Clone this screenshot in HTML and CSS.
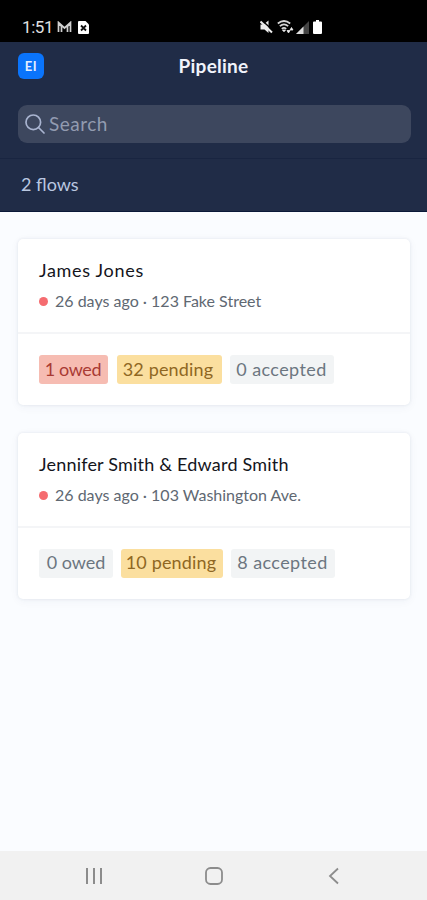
FILE: index.html
```html
<!DOCTYPE html>
<html lang="en">
<head>
<meta charset="utf-8">
<title>Pipeline</title>
<link rel="stylesheet" href="styles.css">
</head>
<body>
<div class="status">
  <div class="status-left">
    <span class="time">1:51</span>
    <svg class="mail" width="15" height="12" viewBox="0 0 15 12" fill="none" stroke="#d0d0d0"><path d="M1.500 11V1.500L7.500 7l6-5.500V11M4.500 11V5.500M10.500 11V5.500M1.500 1.500l3 4M13.500 1.500l-3 4" stroke-width="1.700"/></svg>
    <svg class="sim" width="11" height="13" viewBox="0 0 11 13"><path d="M1 0h6.500L11 3.500V12q0 1-1 1H1q-1 0-1-1V1q0-1 1-1z" fill="#fff"/><path d="M3 4.500l5 5M8 4.500l-5 5" stroke="#111" stroke-width="1.800"/></svg>
  </div>
  <div class="status-right">
    <svg width="13" height="14" viewBox="0 0 13 14"><path d="M0.500 4.500h3L8.500 0.500v12.500L4.500 9.500h-4z" fill="#eee"/><path d="M1.500 0l12 11" stroke="#000" stroke-width="1.500"/><path d="M0.500 1.500l11.500 11" stroke="#eee" stroke-width="2"/></svg>
    <svg class="wifi" width="17" height="14" viewBox="0 0 17 14" fill="none" stroke="#d5d5d5" stroke-width="1.700"><path d="M0.800 3.500q6.200-5 12.400 0M2.800 6.200q4.200-3.500 8.400 0M4.800 8.800q2.200-1.800 4.400 0"/><path d="M5.500 10h3L7 11.800zM10 10.500l1.500 2.500 1.500-2.500zM13 10l1.500-2.500 1.500 2.500z" fill="#eee" stroke="#eee" stroke-width=".8"/></svg>
    <svg class="signal" width="13" height="13" viewBox="0 0 13 13"><path d="M0 13L13 0v13z" fill="#444"/><path d="M0 13l7.500-7.500V13z" fill="#ddd"/></svg>
    <svg class="battery" width="9" height="14" viewBox="0 0 9 14"><path d="M3 0h3v1.500h2q1 0 1 1V13q0 1-1 1H1q-1 0-1-1V2.500q0-1 1-1h2z" fill="#fff"/></svg>
  </div>
</div>
<header class="header">
  <div class="titlebar">
    <div class="avatar">EI</div>
    <h1 class="title">Pipeline</h1>
  </div>
  <div class="search">
    <svg width="20" height="20" viewBox="0 0 20 20" fill="none" stroke="#a9b4d0" stroke-width="1.700" stroke-linecap="round"><circle cx="8.300" cy="8.300" r="7.300"/><path d="M13.500 13.500l5.500 5.500"/></svg>
    <span class="search-label">Search</span>
  </div>
  <div class="count"><span>2 flows</span></div>
</header>
<main class="list">
  <article class="card">
    <div class="info">
      <h2 class="name name-a">James Jones</h2>
      <p class="meta meta-a"><i class="dot"></i><span>26 days ago · 123 Fake Street</span></p>
    </div>
    <div class="chips">
      <span class="chip red w69">1 owed</span>
      <span class="chip yellow w105">32 pending</span>
      <span class="chip accepted w104">0 accepted</span>
    </div>
  </article>
  <article class="card">
    <div class="info">
      <h2 class="name name-b">Jennifer Smith &amp; Edward Smith</h2>
      <p class="meta meta-b"><i class="dot"></i><span>26 days ago · 103 Washington Ave.</span></p>
    </div>
    <div class="chips">
      <span class="chip w74">0 owed</span>
      <span class="chip yellow w102">10 pending</span>
      <span class="chip accepted w104">8 accepted</span>
    </div>
  </article>
</main>
<nav class="nav">
  <svg width="18" height="18" viewBox="0 0 18 18" stroke="#8c8c8c" stroke-width="2"><path d="M2 1v16M9 1v16M16 1v16"/></svg>
  <svg width="18" height="18" viewBox="0 0 18 18" fill="none" stroke="#8c8c8c" stroke-width="1.800"><rect x="1" y="1" width="16" height="16" rx="4.500"/></svg>
  <svg width="18" height="18" viewBox="0 0 18 18" fill="none" stroke="#8c8c8c" stroke-width="1.800"><path d="M13 1.500L5 9l8 7.500"/></svg>
</nav>
</body>
</html>
```
FILE: styles.css
```css
* { box-sizing: border-box; margin: 0; padding: 0; }
body {
  width: 427px;
  height: 900px;
  display: flex;
  flex-direction: column;
  background: #fafcff;
  font-family: Lato, "Open Sans", sans-serif;
  overflow: hidden;
}
svg { display: block; flex: none; }
.status {
  height: 42px;
  background: #000;
  color: #e0e0e0;
  display: flex;
  justify-content: space-between;
  padding: 12px 105px 0 22px;
}
.status-left, .status-right { display: flex; align-items: center; height: 30px; }
.time { font: 400 17px/30px Roboto, sans-serif; width: 35px; letter-spacing: -0.4px; }
.sim { margin-left: 6px; }
.wifi { margin-left: 4px; }
.signal { margin-left: 2px; }
.battery { margin-left: 4px; }
.header {
  height: 170px;
  background: #202c47;
  border-bottom: 1px solid #0a1838;
}
.titlebar {
  height: 63px;
  display: grid;
  grid-template-columns: 26px 1fr 26px;
  align-items: start;
  padding: 11px 18px 0;
}
.avatar {
  height: 26px;
  border-radius: 6px;
  background: #0a74fb;
  color: #e3efff;
  font-size: 13px;
  font-weight: 700;
  line-height: 26px;
  text-align: center;
  letter-spacing: 0.5px;
}
.title {
  color: #f0f3fb;
  font-size: 19px;
  font-weight: 700;
  line-height: 26px;
  text-align: center;
  letter-spacing: 0.25px;
}
.search {
  height: 38px;
  margin: 0 16px 0 18px;
  padding: 0 0 1px 7px;
  border-radius: 9px;
  background: #3d475e;
  display: flex;
  align-items: center;
}
.search-label { margin-left: 4px; padding-bottom: 1px; font-size: 19px; letter-spacing: 0.5px; color: #929bb0; }
.count {
  margin-top: 15px;
  padding: 0 21px;
  height: 53px;
  border-top: 1px solid #192541;
  color: #bac7e0;
  font-size: 18px;
  line-height: 51px;
}
.list {
  flex: 1;
  display: flex;
  flex-direction: column;
  gap: 28px;
  padding: 27px 17px 0 18px;
}
.card {
  height: 166px;
  border-radius: 5px;
  background: #fff;
  box-shadow: 0 0 3px rgba(40, 60, 90, 0.1), 0 2px 10px rgba(40, 60, 90, 0.05);
}
.info { height: 95px; padding: 19px 21px 0; border-bottom: 2px solid #f4f5f7; }
.name { font-size: 18px; font-weight: 400; line-height: 24px; color: #14151c; white-space: nowrap; }
.name-a { letter-spacing: 0.7px; }
.name-b { letter-spacing: 0.2px; }
.meta { display: flex; align-items: center; margin-top: 7px; font-size: 16px; line-height: 24px; color: #606872; white-space: nowrap; }
.dot { width: 9px; height: 9px; margin-right: 7px; border-radius: 50%; background: #f56c70; }
.chips { display: flex; gap: 8.500px; padding: 21px 21px 0; }
.chip {
  height: 29px;
  border-radius: 3px;
  background: #f2f4f5;
  color: #6c7680;
  font-size: 18px;
  line-height: 28px;
  text-align: center;
  white-space: nowrap;
}
.card + .card .chips { gap: 8px; }
.card + .card .chip { line-height: 27px; }
.red { background: #f6bcb2; color: #a93a34; letter-spacing: -0.4px; padding-right: 1px; }
.yellow { background: #fbdf9f; color: #8f6723; padding-right: 2px; letter-spacing: 0.15px; }
.accepted { letter-spacing: 0.4px; padding-right: 1px; }
.w69 { width: 69px; }
.w74 { width: 74px; }
.w102 { width: 102px; }
.w104 { width: 104px; }
.w105 { width: 105px; }
.nav {
  height: 49px;
  background: #f1f1f1;
  display: flex;
  align-items: center;
  justify-content: space-between;
  padding: 1px 84px 0 85px;
}
```
